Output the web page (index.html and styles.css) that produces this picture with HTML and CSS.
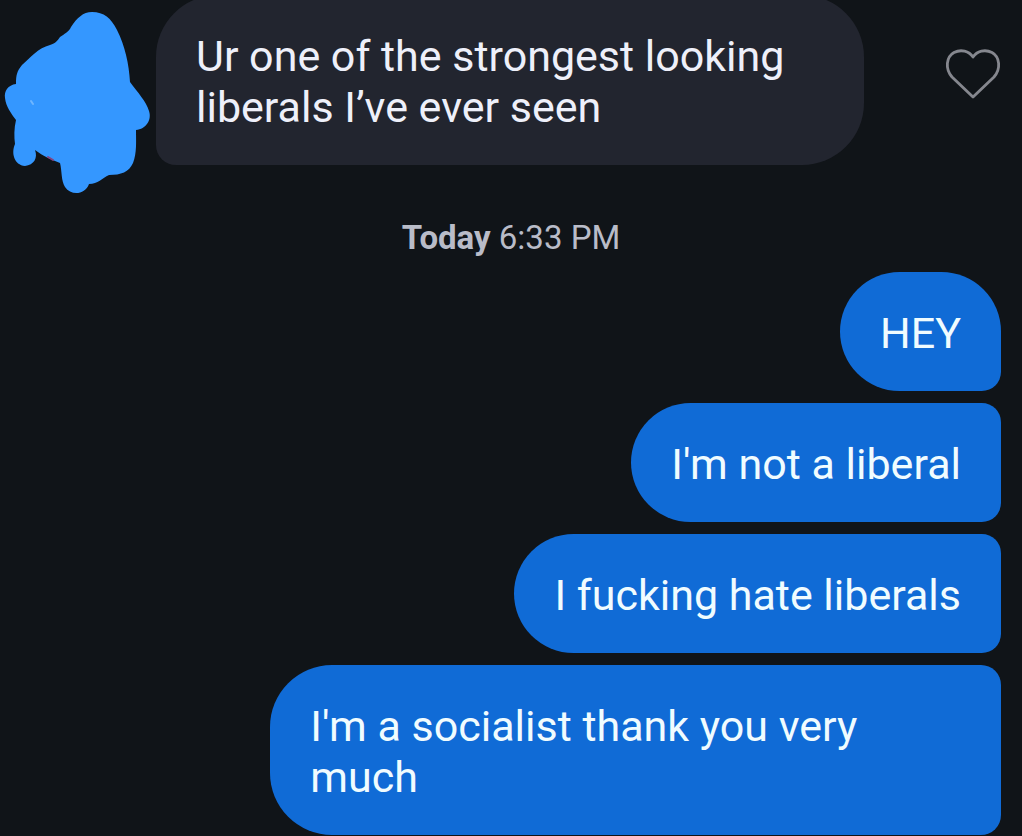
FILE: index.html
```html
<!DOCTYPE html>
<html lang="en">
<head>
  <meta charset="UTF-8">
  <meta name="viewport" content="width=device-width, initial-scale=1">
  <title>Chat</title>
  <link rel="stylesheet" href="styles.css">
</head>
<body>

<main class="thread">
  <div class="incoming">
    <svg class="avatar" viewBox="0 0 156 196" aria-hidden="true">
      <path fill="#3497ff" d="M92 12 C83 12 77 18 71 27 C69 32 64 34 60 37 C57 41 56 43 50 45 C38 48 31 57 22 65 C17 71 16 75 16 84 C8 85 4 91 5 98 C6 107 11 113 16 120 C14 128 14 137 15 144 C11 153 14 165 25 166 C34 165 38 158 35 150 C43 156 52 160 60 163 C62 171 61 181 65 187 C71 196 85 195 89 184 C98 184 102 178 109 175 C121 175 129 172 133 163 C137 153 136 141 136 130 C146 129 152 120 149 111 C146 101 138 93 130 82 C129 64 125 46 117 30 C111 18 104 12 92 12 Z"/>
      <path fill="none" stroke="#6fb6ff" stroke-width="2" stroke-linecap="round" d="M31 101 l2 3"/>
      <path fill="none" stroke="#85437f" stroke-width="2" stroke-linecap="round" d="M48 157 l5 3"/>
    </svg>
    <p class="bubble bubble-in">Ur one of the strongest looking liberals I’ve ever seen</p>
    <button class="like" type="button" aria-label="Like message">
      <svg class="heart" viewBox="0 0 56 52" aria-hidden="true">
        <path fill="none" stroke="#85878e" stroke-width="2.8" stroke-linejoin="round" d="M28 49 L7 29 C0 21 1 9 9 4.500 C16 1 24 3 28 9 C32 3 40 1 47 4.500 C55 9 56 21 49 29 Z"/>
      </svg>
    </button>
  </div>

  <p class="timestamp"><strong>Today</strong> 6:33 PM</p>

  <div class="outgoing">
    <p class="bubble bubble-out first">HEY</p>
    <p class="bubble bubble-out">I'm not a liberal</p>
    <p class="bubble bubble-out">I fucking hate liberals</p>
    <p class="bubble bubble-out">I'm a socialist thank you very much</p>
  </div>
</main>

</body>
</html>
```
FILE: styles.css
```css
* {
  box-sizing: border-box;
}

body {
  margin: 0;
  background: #101418;
  font-family: Roboto, "Liberation Sans", sans-serif;
  overflow: hidden;
}

p {
  margin: 0;
}

.incoming {
  display: flex;
  align-items: flex-start;
}

.avatar {
  flex: none;
  width: 156px;
  height: 196px;
}

.bubble {
  padding: 36px 40px 32px;
  font-size: 43px;
  line-height: 51px;
}

.bubble-in {
  flex: 1;
  margin-top: -5px;
  border-radius: 62px 62px 62px 20px;
  background: #22252f;
  color: #eef0fa;
}

.like {
  flex: none;
  display: flex;
  justify-content: flex-end;
  width: 158px;
  padding: 48px 21px 0 0;
  border: none;
  background: none;
  cursor: pointer;
}

.heart {
  width: 56px;
  height: 52px;
}

.timestamp {
  padding: 20px 0 12px;
  font-size: 33px;
  line-height: 44px;
  text-align: center;
  color: #b9bcc8;
}

.outgoing {
  display: flex;
  flex-direction: column;
  align-items: flex-end;
  gap: 12px;
  padding-right: 21px;
}

.bubble-out {
  max-width: 73%;
  border-radius: 62px 20px 20px 62px;
  background: #106bd6;
  color: #f0fcff;
}

.first {
  border-top-right-radius: 62px;
}
```
